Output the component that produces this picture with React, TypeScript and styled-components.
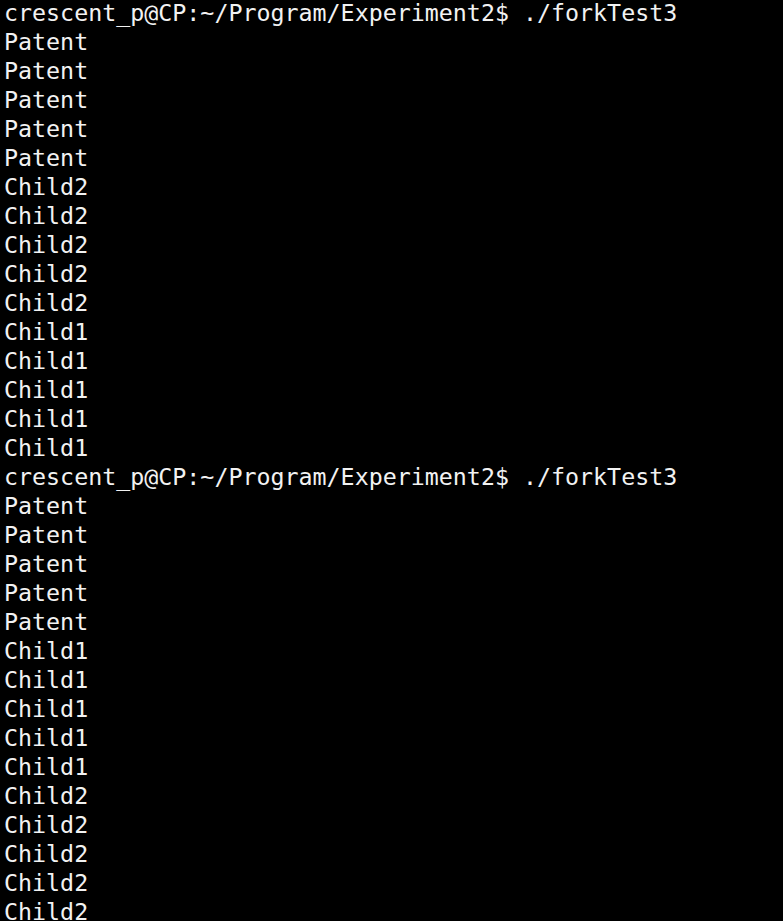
import React from "react";
import styled, { createGlobalStyle } from "styled-components";

const Global = createGlobalStyle`
  html, body { margin: 0; padding: 0; background: #000; }
  body { overflow: hidden; }
`;

const Terminal = styled.div`
  background: #000;
  color: #f2f2f2;
  font-family: "DejaVu Sans Mono", monospace;
  font-size: 23.3px;
  line-height: 29px;
  padding: 0 0 0 4px;
  margin-top: -2px;
  width: 783px;
  height: 923px;
  box-sizing: border-box;
  overflow: hidden;
  white-space: pre;
`;

const Line = styled.div``;

const prompt = "crescent_p@CP:~/Program/Experiment2$ ./forkTest3";
const rep = (s: string, n: number) => Array.from({ length: n }, () => s);

const lines = [
  prompt,
  ...rep("Patent", 5),
  ...rep("Child2", 5),
  ...rep("Child1", 5),
  prompt,
  ...rep("Patent", 5),
  ...rep("Child1", 5),
  ...rep("Child2", 5),
];

export default function App() {
  return (
    <>
      <Global />
      <Terminal>
        {lines.map((l, i) => (
          <Line key={i}>{l}</Line>
        ))}
      </Terminal>
    </>
  );
}
